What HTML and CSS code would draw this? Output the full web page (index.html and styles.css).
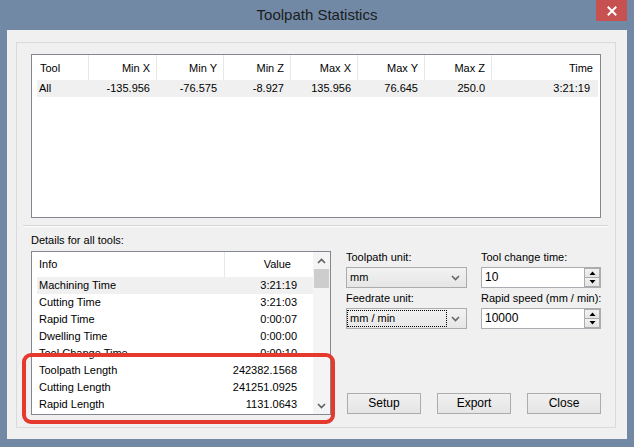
FILE: index.html
```html
<!DOCTYPE html>
<html>
<head>
<meta charset="utf-8">
<title>Toolpath Statistics</title>
<link rel="stylesheet" href="styles.css">
</head>
<body>
<div class="titlebar">
  <div></div>
  <div class="title">Toolpath Statistics</div>
  <div class="close"><svg width="31" height="21" viewBox="0 0 31 21"><path d="M12.5 7.5 L19.5 14.5 M19.5 7.5 L12.5 14.5" stroke="#fff" stroke-width="2" stroke-linecap="square"/></svg></div>
</div>
<div class="client">
  <div class="panel">
    <div class="mlist">
      <div class="mhead">
        <div class="hc left">Tool</div>
        <div class="hc">Min X</div>
        <div class="hc">Min Y</div>
        <div class="hc">Min Z</div>
        <div class="hc">Max X</div>
        <div class="hc">Max Y</div>
        <div class="hc">Max Z</div>
        <div class="hc last">Time</div>
      </div>
      <div class="mrow">
        <div class="rc left">All</div>
        <div class="rc">-135.956</div>
        <div class="rc">-76.575</div>
        <div class="rc">-8.927</div>
        <div class="rc">135.956</div>
        <div class="rc">76.645</div>
        <div class="rc">250.0</div>
        <div class="rc last">3:21:19</div>
      </div>
    </div>
    <div class="sep"></div>
    <div class="dlabel">Details for all tools:</div>
    <div class="bottom">
      <div class="dlist">
        <div class="dcontent">
          <div class="dhead"><div class="dh-info">Info</div><div class="dh-val">Value</div></div>
          <div class="drow sel"><div class="di">Machining Time</div><div class="dv">3:21:19</div></div>
          <div class="drow"><div class="di">Cutting Time</div><div class="dv">3:21:03</div></div>
          <div class="drow"><div class="di">Rapid Time</div><div class="dv">0:00:07</div></div>
          <div class="drow"><div class="di">Dwelling Time</div><div class="dv">0:00:00</div></div>
          <div class="drow"><div class="di">Tool Change Time</div><div class="dv">0:00:10</div></div>
          <div class="drow"><div class="di">Toolpath Length</div><div class="dv">242382.1568</div></div>
          <div class="drow"><div class="di">Cutting Length</div><div class="dv">241251.0925</div></div>
          <div class="drow"><div class="di">Rapid Length</div><div class="dv">1131.0643</div></div>
        </div>
        <div class="scrollbar">
          <div class="sbbtn"><svg width="9" height="6" viewBox="0 0 9 6"><polyline points="1,5 4.5,1.5 8,5" fill="none" stroke="#5f5f5f" stroke-width="1.6"/></svg></div>
          <div class="thumb"></div>
          <div class="track"></div>
          <div class="sbbtn"><svg width="9" height="6" viewBox="0 0 9 6"><polyline points="1,1 4.5,4.5 8,1" fill="none" stroke="#5f5f5f" stroke-width="1.6"/></svg></div>
        </div>
      </div>
      <div class="controls">
        <div class="fields">
          <div class="field">
            <div class="flabel">Toolpath unit:</div>
            <div class="combo"><span class="ctext">mm</span><svg class="chev" width="9" height="6" viewBox="0 0 9 6"><polyline points="1,1 4.5,4.5 8,1" fill="none" stroke="#666" stroke-width="1.6"/></svg></div>
          </div>
          <div class="field">
            <div class="flabel">Tool change time:</div>
            <div class="spin"><span class="stext">10</span><div class="sbtns"><div class="sb"><svg width="7" height="4" viewBox="0 0 7 4"><polygon points="0.5,4 3.5,0.5 6.5,4" fill="#000"/></svg></div><div class="sb"><svg width="7" height="4" viewBox="0 0 7 4"><polygon points="0.5,0 3.5,3.5 6.5,0" fill="#000"/></svg></div></div></div>
          </div>
          <div class="field">
            <div class="flabel">Feedrate unit:</div>
            <div class="combo"><span class="ctext focus">mm / min</span><svg class="chev" width="9" height="6" viewBox="0 0 9 6"><polyline points="1,1 4.5,4.5 8,1" fill="none" stroke="#666" stroke-width="1.6"/></svg></div>
          </div>
          <div class="field">
            <div class="flabel">Rapid speed (mm / min):</div>
            <div class="spin"><span class="stext">10000</span><div class="sbtns"><div class="sb"><svg width="7" height="4" viewBox="0 0 7 4"><polygon points="0.5,4 3.5,0.5 6.5,4" fill="#000"/></svg></div><div class="sb"><svg width="7" height="4" viewBox="0 0 7 4"><polygon points="0.5,0 3.5,3.5 6.5,0" fill="#000"/></svg></div></div></div>
          </div>
        </div>
        <div class="buttons">
          <div class="btn">Setup</div>
          <div class="btn">Export</div>
          <div class="btn">Close</div>
        </div>
      </div>
    </div>
  </div>
</div>
<div class="highlight"></div>
</body>
</html>
```
FILE: styles.css
```css
* { box-sizing: border-box; }
html, body { margin: 0; padding: 0; }
body {
  width: 634px;
  height: 447px;
  background: #7289a6;
  font-family: "Liberation Sans", Arial, sans-serif;
  font-size: 11px;
  color: #000;
  position: relative;
  overflow: hidden;
}
.titlebar {
  height: 30px;
  display: grid;
  grid-template-columns: 1fr auto 1fr;
  align-items: start;
}
.title {
  font-size: 15px;
  line-height: 30px;
  color: #1c1c1c;
}
.close {
  justify-self: end;
  width: 31px;
  height: 21px;
  margin-right: 7px;
  background: #c75050;
}
.close svg { display: block; }
.client {
  margin: 0 7px;
  background: #f0f0f0;
  padding: 12px 11px 11px 9px;
}
.panel {
  border: 1px solid #dadada;
  padding: 11px 14px 12px 14px;
}
.mlist {
  height: 164px;
  border: 1px solid #828790;
  background: #fff;
}
.mhead, .mrow {
  display: grid;
  grid-template-columns: 57px 68px 67px 67px 67px 67px 67px 108px;
}
.mrow {
  grid-template-columns: 52px 68px 67px 67px 67px 67px 67px 106px;
  margin-left: 5px;
  background: #f0f0f0;
  width: 561px;
}
.hc {
  height: 25px;
  padding-top: 2px;
  line-height: 23px;
  text-align: right;
  padding-right: 6px;
  border-right: 1px solid #e4e7eb;
  white-space: nowrap;
}
.hc.left { text-align: left; padding-left: 8px; }
.hc.last { border-right: none; padding-right: 7px; }
.rc {
  line-height: 17px;
  height: 17px;
  text-align: right;
  padding-right: 7px;
  white-space: nowrap;
}
.rc.left { text-align: left; padding-left: 2px; }
.rc.last { padding-right: 8px; }
.sep {
  margin: 7px -7px 7px -8px;
  border-top: 1px solid #d5d5d5;
  border-bottom: 1px solid #fff;
}
.dlabel {
  line-height: 13px;
  margin-bottom: 4px;
}
.bottom {
  display: flex;
  gap: 15px;
}
.dlist {
  width: 300px;
  height: 164px;
  border: 1px solid #828790;
  background: #fff;
  display: flex;
}
.dcontent {
  width: 281px;
  overflow: hidden;
}
.dhead {
  display: grid;
  grid-template-columns: 193px 1fr;
  height: 25px;
  line-height: 25px;
}
.dh-info {
  padding-left: 7px;
  border-right: 1px solid #e4e7eb;
}
.dh-val {
  text-align: right;
  padding-right: 22px;
}
.drow {
  display: grid;
  grid-template-columns: 188px 1fr;
  margin-left: 5px;
  height: 17px;
  line-height: 17px;
  white-space: nowrap;
}
.drow.sel { background: #f0f0f0; }
.di { padding-left: 2px; }
.dv { text-align: right; padding-right: 16px; }
.scrollbar {
  width: 17px;
  background: #f4f4f4;
  display: flex;
  flex-direction: column;
}
.sbbtn {
  height: 17px;
  display: flex;
  align-items: center;
  justify-content: center;
}
.sbbtn svg { display: block; }
.thumb {
  height: 19px;
  margin: 0 1px;
  background: #cdcdcd;
}
.track { flex: 1; }
.controls {
  flex: 1;
  display: flex;
  flex-direction: column;
}
.fields {
  display: grid;
  grid-template-columns: 121px 120px;
  column-gap: 14px;
  row-gap: 4px;
}
.flabel {
  line-height: 13px;
  margin-bottom: 3px;
  white-space: nowrap;
}
.combo {
  height: 21px;
  border: 1px solid #acacac;
  background: linear-gradient(#f2f2f2, #e6e6e6);
  display: flex;
  align-items: center;
  justify-content: space-between;
  padding: 0 6px 0 0;
}
.ctext {
  width: 100px;
  height: 17px;
  line-height: 17px;
  padding-left: 3px;
}
.ctext.focus {
  outline: 1px dotted #000;
  outline-offset: -1px;
}
.chev { display: block; }
.spin {
  height: 21px;
  border: 1px solid #abadb3;
  background: #fff;
  display: flex;
  align-items: stretch;
}
.stext {
  flex: 1;
  line-height: 19px;
  padding-left: 3px;
  font-size: 12px;
}
.sbtns {
  width: 16px;
  display: flex;
  flex-direction: column;
}
.sb {
  flex: 1;
  border: 1px solid #acacac;
  background: linear-gradient(#f2f2f2, #e4e4e4);
  display: flex;
  align-items: center;
  justify-content: center;
}
.sb + .sb { border-top: none; }
.sb svg { display: block; }
.buttons {
  margin-top: auto;
  margin-bottom: 1px;
  padding-left: 1px;
  display: flex;
  gap: 16px;
}
.btn {
  width: 74px;
  height: 21px;
  border: 1px solid #acacac;
  background: linear-gradient(#f0f0f0, #e5e5e5);
  text-align: center;
  line-height: 19px;
  font-size: 12px;
}
.highlight {
  position: absolute;
  left: 22px;
  top: 353px;
  width: 313px;
  height: 71px;
  border: 4.5px solid #e5392e;
  border-radius: 9px;
}
```
